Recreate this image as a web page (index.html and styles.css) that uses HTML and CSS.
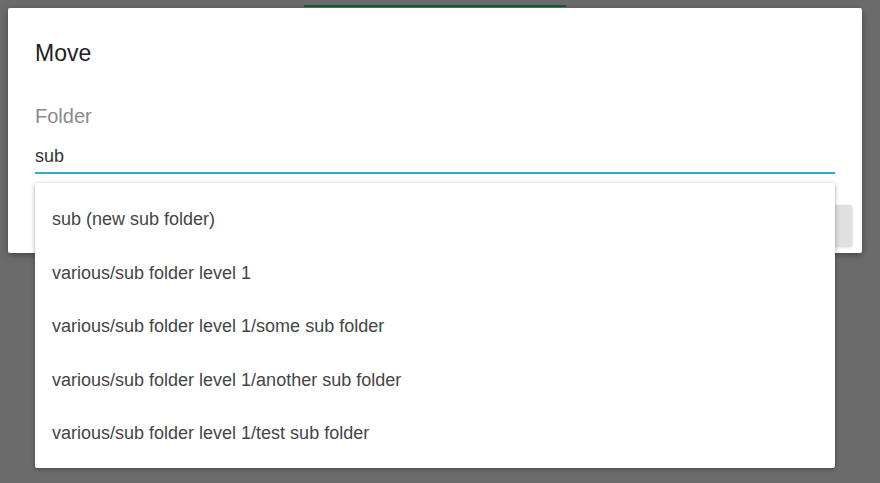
FILE: index.html
```html
<!DOCTYPE html>
<html>
<head>
<meta charset="utf-8">
<link rel="stylesheet" href="styles.css">
</head>
<body>
<div class="page">
  <div class="page-bar"></div>
  <div class="dialog">
    <h2 class="dialog-title">Move</h2>
    <div class="field">
      <label class="field-label">Folder</label>
      <div class="field-input">sub</div>
      <ul class="suggestions">
        <li class="suggestion">sub (new sub folder)</li>
        <li class="suggestion">various/sub folder level 1</li>
        <li class="suggestion">various/sub folder level 1/some sub folder</li>
        <li class="suggestion">various/sub folder level 1/another sub folder</li>
        <li class="suggestion">various/sub folder level 1/test sub folder</li>
      </ul>
    </div>
    <div class="actions">
      <button class="btn">Move</button>
    </div>
  </div>
</div>
</body>
</html>
```
FILE: styles.css
```css
html, body {
  margin: 0;
  padding: 0;
  background: #6b6b6b;
  font-family: "Liberation Sans", Arial, sans-serif;
}
.page {
  width: 880px;
  height: 483px;
  padding-top: 5px;
  box-sizing: border-box;
  overflow: hidden;
}
.page-bar {
  margin-left: 304px;
  width: 262px;
  height: 2px;
  background: #1e5b2b;
}
.dialog {
  margin: 1px 0 0 8px;
  width: 854px;
  box-sizing: border-box;
  background: #fff;
  border-radius: 2px;
  box-shadow: 0 2px 6px rgba(0, 0, 0, 0.35);
  padding: 29px 27px 7px 27px;
}
.dialog-title {
  margin: 0;
  font-size: 23px;
  line-height: 32px;
  font-weight: normal;
  color: #212121;
}
.field {
  position: relative;
  margin-top: 35px;
}
.field-label {
  display: block;
  font-size: 20px;
  line-height: 24px;
  color: #8a8a8a;
}
.field-input {
  margin-top: 16px;
  font-size: 18px;
  line-height: 24px;
  color: #333;
  padding-bottom: 4px;
  border-bottom: 2px solid #2aaed3;
}
.suggestions {
  position: absolute;
  left: 0;
  right: 0;
  top: calc(100% + 9px);
  margin: 0;
  padding: 10px 0 7px;
  list-style: none;
  background: #fff;
  border-radius: 2px;
  box-shadow: 0 1px 4px rgba(0, 0, 0, 0.35);
  z-index: 2;
}
.suggestion {
  height: 53.5px;
  display: flex;
  align-items: center;
  padding-left: 17px;
  font-size: 18px;
  color: #454545;
}
.actions {
  display: flex;
  justify-content: flex-end;
  margin-top: 31px;
  margin-right: -17px;
}
.btn {
  width: 90px;
  height: 41px;
  border: none;
  border-radius: 2px;
  background: #e0e0e0;
  box-shadow: 0 1px 3px rgba(0, 0, 0, 0.2);
  font-family: inherit;
  font-size: 15px;
  color: #333;
}
```
